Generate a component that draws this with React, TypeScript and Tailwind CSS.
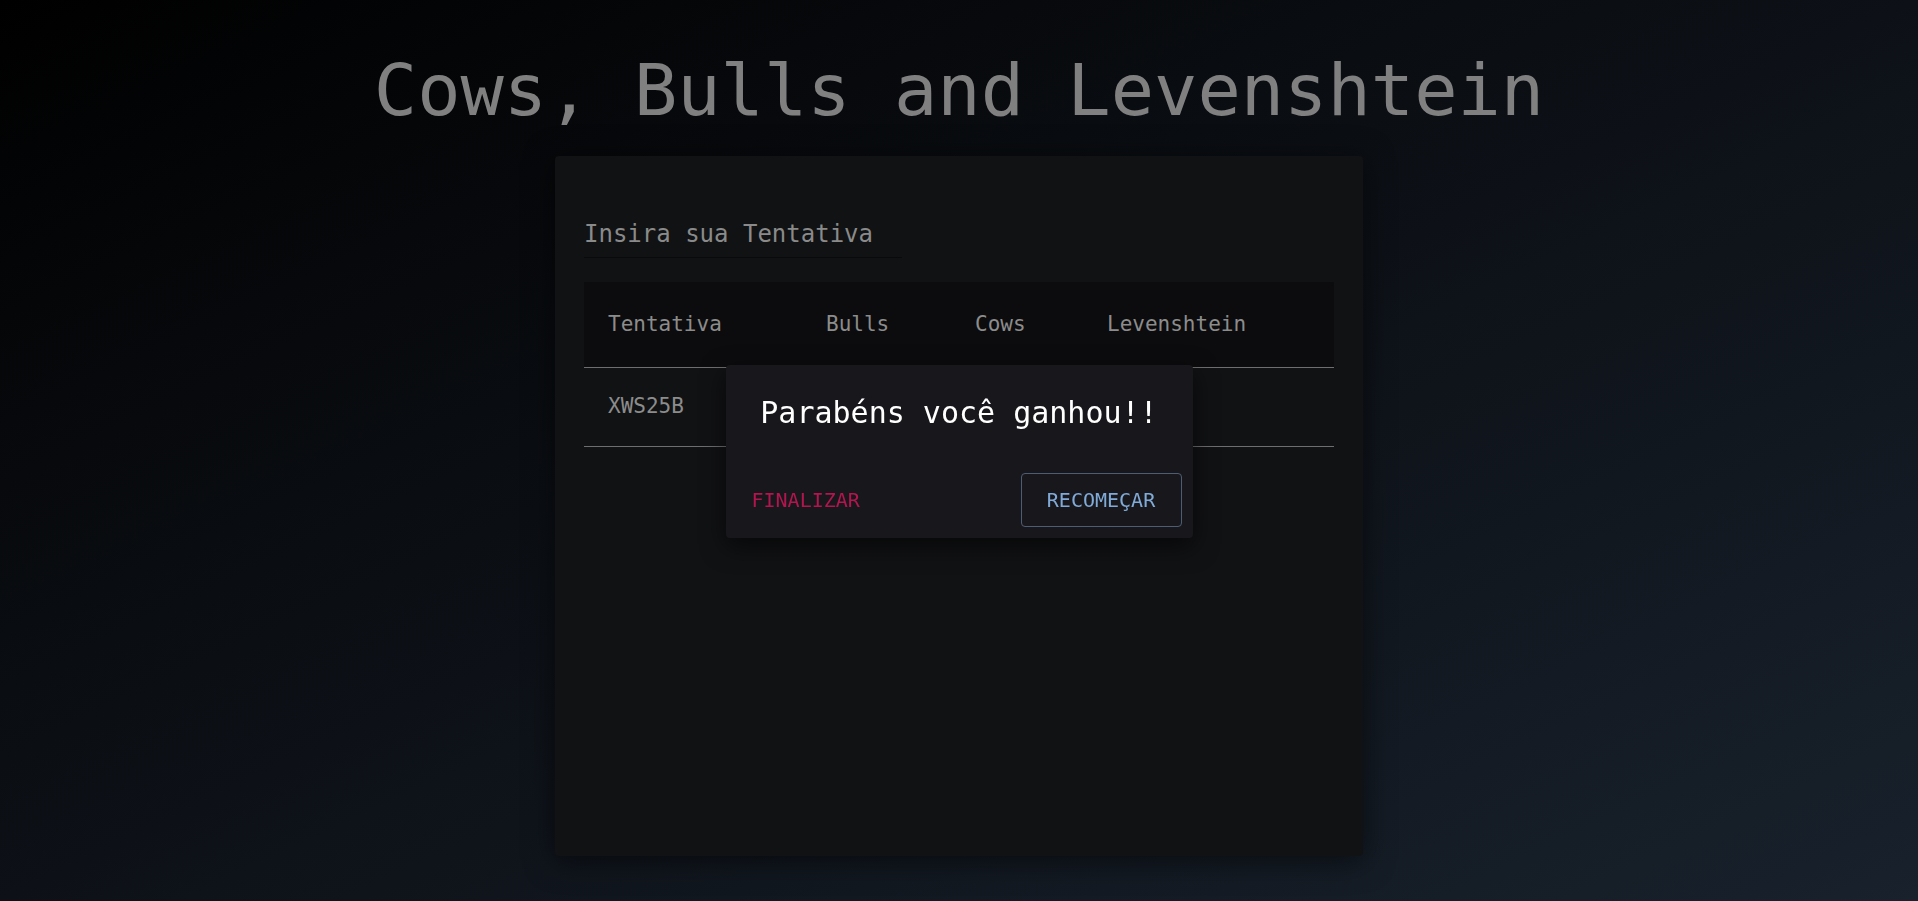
import React from "react";

const mono = "font-['DejaVu_Sans_Mono','Liberation_Mono',monospace]";

// bulls/cows/levenshtein values sit under the dialog, so they are left blank here
const rows = [{ guess: "XWS25B" }];

const App = () => {
  return (
    <div className={`min-h-[901px] w-full bg-[linear-gradient(to_bottom_right,#000000,#0d1117_50%,#18212c)] ${mono}`}>
      <h1 className="text-center text-[72px] leading-none text-[#808080] pt-[54px]">
        Cows, Bulls and Levenshtein
      </h1>

      {/* game board */}
      <div className="mx-auto mt-[30px] w-[808px] h-[700px] rounded bg-[#111214] px-[29px] pt-[66px] shadow-[0_4px_30px_rgba(0,0,0,0.55)]">
        <div className="w-[318px] border-b border-[#0a0a0b] pb-[11px]">
          <span className="block text-[24px] leading-none text-[#8a8a8a]">Insira sua Tentativa</span>
        </div>

        <div className="mt-[24px] w-full">
          <div className="grid grid-cols-[218px_149px_132px_1fr] h-[86px] items-center bg-[#0c0c0e] border-b border-[#6e6e6e] text-[21px] text-[#8c8c8c]">
            <span className="pl-6">Tentativa</span>
            <span className="pl-6">Bulls</span>
            <span className="pl-6">Cows</span>
            <span className="pl-6">Levenshtein</span>
          </div>
          {rows.map((r) => (
            <div
              key={r.guess}
              className="grid grid-cols-[218px_149px_132px_1fr] h-[79px] items-center border-b border-[#6e6e6e] text-[21px] text-[#8c8c8c]"
            >
              <span className="pl-6">{r.guess}</span>
              <span className="pl-6" />
              <span className="pl-6" />
              <span className="pl-6" />
            </div>
          ))}
        </div>
      </div>

      {/* win dialog */}
      <div className="fixed inset-0 flex items-center justify-center pt-[2px]">
        <div className="flex h-[173px] w-[467px] flex-col justify-between rounded bg-[#18181c] shadow-[0_8px_24px_rgba(0,0,0,0.6)]">
          <h2 className="pt-[33px] text-center text-[30px] leading-none text-white">Parabéns você ganhou!!</h2>
          <div className="flex items-center justify-between px-[11px] pb-[11px]">
            <button className="h-[54px] pl-[15px] pr-2 text-[20px] text-[#b3154f]">FINALIZAR</button>
            <button className="h-[54px] w-[161px] rounded border border-[#4d5d73] text-[20px] text-[#80aad8]">
              RECOMEÇAR
            </button>
          </div>
        </div>
      </div>
    </div>
  );
};

export default App;
